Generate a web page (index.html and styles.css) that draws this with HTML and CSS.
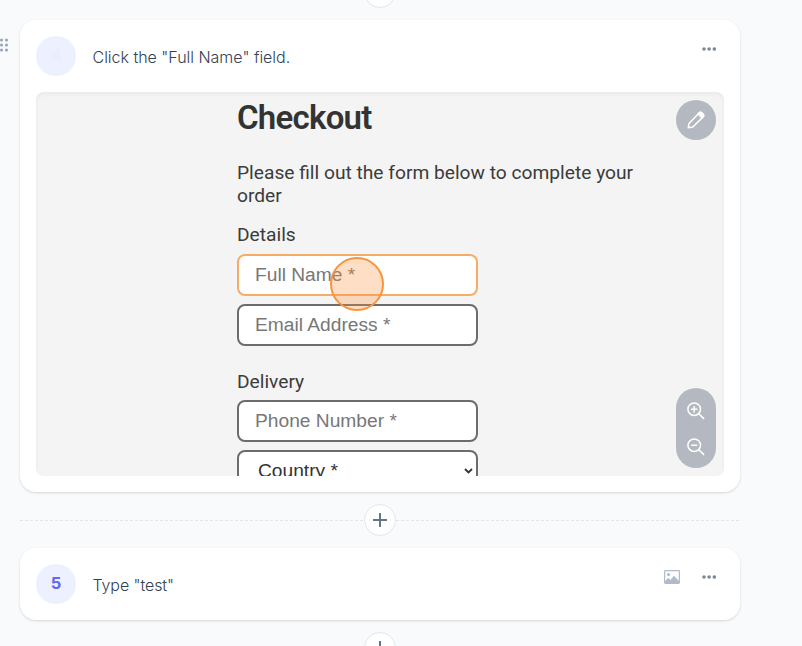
FILE: index.html
```html
<!DOCTYPE html>
<html lang="en">
<head>
<meta charset="utf-8">
<title>Guide steps</title>
<link rel="stylesheet" href="styles.css">
</head>
<body>
<main class="steps">
  <div class="divider divider-plain"><button class="add" aria-label="Add step"><svg width="14" height="14" viewBox="0 0 14 14"><path d="M7 0v14M0 7h14"/></svg></button></div>
  <section class="card">
    <svg class="grip" width="10" height="14" viewBox="0 0 10 14"><g><circle cx="2.5" cy="2" r="1.5"/><circle cx="7.5" cy="2" r="1.5"/><circle cx="2.5" cy="7" r="1.5"/><circle cx="7.5" cy="7" r="1.5"/><circle cx="2.5" cy="12" r="1.5"/><circle cx="7.5" cy="12" r="1.5"/></g></svg>
    <header class="head">
      <span class="num faded">4</span>
      <p class="title title-click">Click the "Full Name" field.</p>
      <svg class="dots" width="14" height="4" viewBox="0 0 14 4"><circle cx="2" cy="2" r="1.8"/><circle cx="7.1" cy="2" r="1.8"/><circle cx="12.3" cy="2" r="1.8"/></svg>
    </header>
    <div class="shot">
      <div class="form">
        <h1>Checkout</h1>
        <p class="intro">Please fill out the form below to complete your<br>order</p>
        <h2>Details</h2>
        <div class="field active">Full Name *</div>
        <div class="field">Email Address *</div>
        <h2 class="delivery">Delivery</h2>
        <div class="field">Phone Number *</div>
        <div class="field select">Country *<svg width="9" height="6" viewBox="0 0 9 6"><path d="M1 1l3.5 3.5L8 1"/></svg></div>
      </div>
      <span class="click"></span>
      <button class="tool edit" aria-label="Edit"><svg width="18" height="18" viewBox="0 0 18 18"><path d="M1.2 16.8l.8-4.4L12.1 1.9q1.2-1.1 2.5 0l1.5 1.5q1.1 1.2 0 2.5L5.8 16z"/><path class="fill" d="M11.1 2.9l1.2-1.2q1.2-.9 2.4 0L16.3 3.4q.9 1.2 0 2.4l-1.2 1.1z"/></svg></button>
      <div class="tool zoom">
        <svg width="18" height="18" viewBox="0 0 18 18"><circle cx="7.2" cy="7.2" r="6.3"/><path d="M11.8 11.8l5.3 5.1M7.2 4v6.4M4 7.2h6.4"/></svg>
        <svg width="18" height="18" viewBox="0 0 18 18"><circle cx="7.2" cy="7.2" r="6.3"/><path d="M11.8 11.8l5.3 5.1M4.2 7.2h6"/></svg>
      </div>
    </div>
  </section>
  <div class="divider"><button class="add" aria-label="Add step"><svg width="14" height="14" viewBox="0 0 14 14"><path d="M7 0v14M0 7h14"/></svg></button></div>
  <section class="card small">
    <header class="head">
      <span class="num">5</span>
      <p class="title title-type">Type "test"</p>
      <svg class="image" width="16" height="14" viewBox="0 0 16 14"><rect x=".6" y=".6" width="14.8" height="12.8" rx=".8"/><circle cx="4.5" cy="4.5" r="1.6"/><path d="M1 13v-1.8l3.2-3.4L6.4 10l3.5-4.3 5.1 5.2V13z"/></svg>
      <svg class="dots" width="14" height="4" viewBox="0 0 14 4"><circle cx="2" cy="2" r="1.8"/><circle cx="7.1" cy="2" r="1.8"/><circle cx="12.3" cy="2" r="1.8"/></svg>
    </header>
  </section>
  <div class="divider divider-plain"><button class="add" aria-label="Add step"><svg width="14" height="14" viewBox="0 0 14 14"><path d="M7 0v14M0 7h14"/></svg></button></div>
</main>
</body>
</html>
```
FILE: styles.css
```css
* { box-sizing: border-box; }
html, body { height: 100%; }
body { margin: 0; overflow: hidden; background: #f8fafc; font-family: Inter, sans-serif; }
h1, h2, p { margin: 0; font-weight: 400; }
button { border: 0; padding: 0; }
svg { display: block; flex: none; }
.steps { width: 720px; margin: -36px 0 0 20px; }
.divider { height: 56px; display: flex; align-items: center; }
.divider::before, .divider::after { content: ""; flex: 1; height: 1px; background: repeating-linear-gradient(90deg, #e2e6ec 0 3px, transparent 3px 5px); }
.add { width: 32px; height: 32px; border: 1px solid #e2e8f0; border-radius: 50%; background: #fff; display: grid; place-items: center; }
.add path { stroke: #64748b; stroke-width: 2; }
.card { position: relative; height: 472px; padding: 16px; border-radius: 16px; background: #fff; box-shadow: 0 1px 3px rgba(15,23,42,.1), 0 1px 2px rgba(15,23,42,.06); }
.small { height: 72px; }
.grip { position: absolute; left: -21px; top: 18px; fill: #94a3b8; }
.head { height: 40px; display: flex; align-items: center; }
.num { width: 40px; height: 40px; border-radius: 50%; background: #edf1ff; color: #6366f1; font-size: 16.5px; font-weight: 700; line-height: 39px; text-align: center; }
.faded { color: #e8edfe; }
.title { flex: 1; margin-left: 16.5px; padding-top: 1px; color: #334155; font-size: 16px; font-weight: 350; line-height: 24px; white-space: nowrap; }
.title-click { letter-spacing: -.02px; }
.title-type { letter-spacing: -.1px; }
.dots { margin: -14px 8px 0 0; fill: #7d8799; }
.image { margin: -15px 22px 0 0; fill: #b0bac8; }
.image rect { fill: none; stroke: #b0bac8; stroke-width: 1.2; }
.shot { position: relative; height: 384px; margin-top: 16px; padding-left: 201px; overflow: hidden; border-radius: 8px; background: #f4f4f4; box-shadow: inset 0 2px 4px rgba(0,0,0,.05); color: #3b3b3b; font-family: Roboto, sans-serif; }
.form { width: 430px; }
h1 { padding-top: 6px; font-size: 33px; font-weight: 600; line-height: 40px; letter-spacing: -.75px; color: #333; }
.intro { margin-top: 23px; font-size: 19.2px; line-height: 23px; white-space: nowrap; }
h2 { margin-top: 16px; font-size: 19.2px; line-height: 23px; }
.field { width: 241px; height: 42px; margin-top: 8px; padding-left: 16px; border: 2px solid #6c6c6c; border-radius: 8px; background: #fff; color: #777; font: 19.2px/38px "Liberation Sans", sans-serif; }
h2.delivery + .field { margin-top: 7px; }
.active { border-color: #f7ac65; }
h2.delivery { margin-top: 24px; }
.select { position: relative; padding-left: 19px; color: #333; }
.select svg { position: absolute; right: 3px; top: 16px; fill: none; stroke: #333; stroke-width: 1.8; }
.click { position: absolute; left: 294px; top: 165px; width: 54px; height: 54px; border: 2px solid #fb923c; border-radius: 50%; background: rgba(251,146,60,.3); }
.tool { position: absolute; right: 8px; width: 40px; background: #b4b8c1; border-radius: 20px; }
.tool svg { fill: none; stroke: #fff; stroke-width: 1.5; stroke-linejoin: round; }
.tool .fill { fill: #fff; }
.edit { top: 8px; height: 40px; display: grid; place-items: center; }
.zoom { bottom: 8px; height: 80px; padding: 14px 10.5px; display: flex; flex-direction: column; gap: 18px; }
```
